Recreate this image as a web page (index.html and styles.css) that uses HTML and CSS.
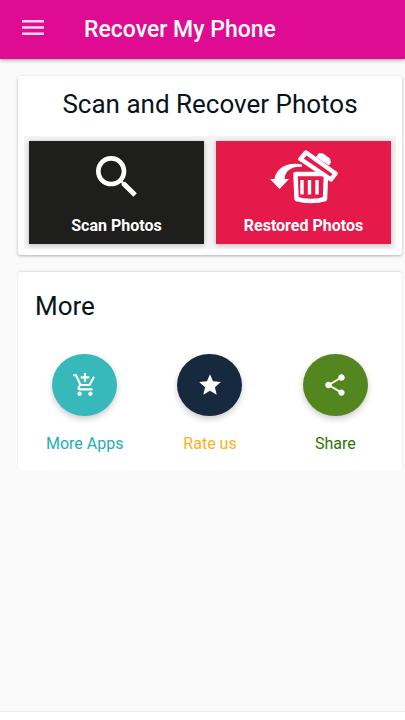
FILE: index.html
```html
<!DOCTYPE html>
<html lang="en">
<head>
<meta charset="utf-8">
<meta name="viewport" content="width=device-width, initial-scale=1">
<title>Recover My Phone</title>
<link rel="stylesheet" href="styles.css">
</head>
<body>
<header class="app-bar">
  <button class="menu-button" type="button" aria-label="Open menu">
    <svg width="22" height="15" viewBox="0 0 22 15" fill="currentColor"><path d="M0 0h22v2.600H0zM0 6.200h22v2.600H0zM0 12.400h22V15H0z"/></svg>
  </button>
  <h1 class="app-title">Recover My Phone</h1>
</header>
<main class="content">
  <section class="card">
    <h2 class="card-title card-title-center">Scan and Recover Photos</h2>
    <div class="tiles">
      <button class="tile tile-scan" type="button">
        <svg class="tile-icon" viewBox="0 0 24 24" fill="currentColor"><path d="M15.5 14h-.79l-.28-.27A6.471 6.471 0 0 0 16 9.5 6.5 6.5 0 1 0 9.5 16c1.61 0 3.09-.59 4.23-1.57l.27.28v.79l5 4.99L20.49 19l-4.99-5zm-6 0C7.01 14 5 11.99 5 9.5S7.01 5 9.5 5 14 7.01 14 9.5 11.99 14 9.5 14z"/></svg>
        <span>Scan Photos</span>
      </button>
      <button class="tile tile-restored" type="button">
        <svg class="tile-icon tile-icon-wide" viewBox="0 0 68 56" fill="none" stroke="currentColor">
          <path fill="currentColor" stroke="none" d="M0 30h4.500C6 20 16 12.500 32 15.500v2.500C22 17 15 22 14.500 30H19L9.500 40z"/>
          <path stroke-width="4.500" stroke-linejoin="round" d="M25.500 25H56l-1 25q-6 2-14 2T26.500 50z"/>
          <path stroke-width="3.400" d="M32 31v14.500M39.500 31v14.500M47 31v14.500"/>
          <path fill="#e6194b" stroke-width="4.500" stroke-linejoin="round" d="M36 3.500L65.500 24.500 61 30.500 30.500 10z"/>
          <path fill="currentColor" stroke="none" d="M46 8l3-4 4 .5 7 5 1 4-2 3z"/>
        </svg>
        <span>Restored Photos</span>
      </button>
    </div>
  </section>
  <section class="card card-more">
    <h2 class="card-title">More</h2>
    <div class="actions">
      <a class="action action-apps" href="#apps">
        <span class="disc"><svg class="action-icon" viewBox="0 0 24 24" fill="currentColor"><path d="M11 9h2V6h3V4h-3V1h-2v3H8v2h3v3zm-4 9c-1.100 0-1.990.9-1.990 2S5.900 22 7 22s2-.9 2-2-.9-2-2-2zm10 0c-1.100 0-1.990.9-1.990 2s.89 2 1.990 2 2-.9 2-2-.9-2-2-2zm-9.830-3.250l.03-.12.9-1.630h7.450c.75 0 1.410-.41 1.750-1.030l3.860-7.010L19.420 4h-.01l-1.100 2-2.760 5H8.530l-.13-.27L6.160 6l-.95-2-.94-2H1v2h2l3.600 7.590-1.350 2.450c-.16.28-.25.61-.25.96 0 1.100.9 2 2 2h12v-2H7.420c-.13 0-.25-.11-.25-.25z"/></svg></span>
        <span>More Apps</span>
      </a>
      <a class="action action-rate" href="#rate">
        <span class="disc"><svg class="action-icon" viewBox="0 0 24 24" fill="currentColor"><path d="M12 17.270L18.180 21l-1.640-7.030L22 9.240l-7.190-.61L12 2 9.190 8.630 2 9.240l5.460 4.730L5.820 21z"/></svg></span>
        <span>Rate us</span>
      </a>
      <a class="action action-share" href="#share">
        <span class="disc"><svg class="action-icon" viewBox="0 0 24 24" fill="currentColor"><path d="M18 16.080c-.76 0-1.440.3-1.960.77L8.910 12.700c.05-.23.09-.46.09-.7s-.04-.47-.09-.7l7.050-4.110c.54.5 1.250.81 2.040.81 1.660 0 3-1.340 3-3s-1.340-3-3-3-3 1.340-3 3c0 .24.040.47.090.7L8.040 9.810C7.500 9.310 6.790 9 6 9c-1.660 0-3 1.340-3 3s1.340 3 3 3c.79 0 1.500-.31 2.040-.81l7.120 4.160c-.05.21-.08.43-.08.65 0 1.610 1.310 2.920 2.920 2.920s2.920-1.310 2.920-2.920-1.310-2.920-2.920-2.920z"/></svg></span>
        <span>Share</span>
      </a>
    </div>
  </section>
</main>
<footer class="banner"></footer>
</body>
</html>
```
FILE: styles.css
```css
* {
  box-sizing: border-box;
}

body {
  margin: 0;
  min-height: 100vh;
  display: flex;
  flex-direction: column;
  background: #fafafa;
  color: #07141c;
  font-family: Roboto, "Liberation Sans", sans-serif;
}

button {
  border: 0;
  padding: 0;
  font: inherit;
  color: inherit;
  cursor: pointer;
}

svg {
  display: block;
}

.app-bar {
  display: flex;
  align-items: center;
  gap: 40px;
  height: 59px;
  padding: 0 22px;
  background: #e00b93;
  color: #fff;
  box-shadow: 0 1px 4px rgba(0, 0, 0, 0.4);
}

.menu-button {
  padding-bottom: 4px;
  background: none;
  opacity: 0.85;
}

.app-title {
  margin: 0;
  font-size: 23px;
  font-weight: 500;
  line-height: 28px;
}

.content {
  flex: 1;
  display: flex;
  flex-direction: column;
  gap: 17px;
  padding: 17px 3px 0 18px;
}

.card {
  padding: 12px 6px 6px;
  background: #fff;
  border-radius: 3px;
  box-shadow: 0 1px 3px rgba(0, 0, 0, 0.3);
}

.card-title {
  margin: 0;
  font-size: 26px;
  font-weight: 400;
  line-height: 32px;
}

.card-title-center {
  text-align: center;
}

.tiles {
  display: grid;
  grid-template-columns: 1fr 1fr;
  gap: 12px;
  margin-top: 16px;
  padding: 5px;
  background: #f4f4f4;
}

.tile {
  display: flex;
  flex-direction: column;
  align-items: center;
  justify-content: space-between;
  height: 103px;
  padding: 8px 0;
  color: #fff;
  font-size: 16px;
  font-weight: 700;
  line-height: 20px;
  box-shadow: 0 1px 5px rgba(0, 0, 0, 0.25);
}

.tile-scan {
  background: #1e1e1c;
}

.tile-restored {
  background: #e6194b;
}

.tile-icon {
  width: 56px;
  height: 56px;
}

.tile-icon-wide {
  width: 68px;
}

.card-more {
  padding: 18px 4px 16px;
  box-shadow: 0 -1px 2px rgba(0, 0, 0, 0.12);
}

.card-more .card-title {
  padding-left: 13px;
}

.actions {
  display: grid;
  grid-template-columns: repeat(3, 1fr);
  margin-top: 32px;
}

.action {
  display: flex;
  flex-direction: column;
  align-items: center;
  gap: 18px;
  font-size: 16px;
  line-height: 20px;
  text-decoration: none;
}

.disc {
  display: grid;
  place-items: center;
  width: 65px;
  height: 62px;
  border-radius: 50%;
  color: #fff;
  box-shadow: 0 3px 6px rgba(0, 0, 0, 0.2);
}

.action-icon {
  width: 26px;
  height: 26px;
}

.action-apps {
  color: #1cb0b2;
}

.action-apps .disc {
  background: #37b8ba;
}

.action-rate {
  color: #fdb01c;
}

.action-rate .disc {
  background: #17293f;
}

.action-share {
  color: #2f7405;
}

.action-share .disc {
  background: #53861f;
}

.action .disc {
  color: #fff;
}

.banner {
  height: 9px;
  border-top: 1px solid #ececec;
  background: #fff;
}
```
